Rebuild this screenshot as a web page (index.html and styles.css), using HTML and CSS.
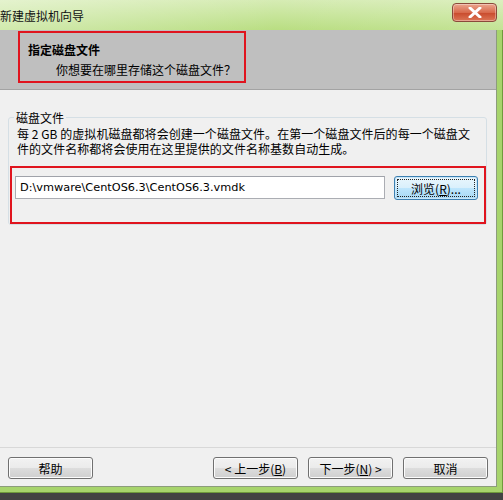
FILE: index.html
```html
<!DOCTYPE html>
<html lang="zh-CN">
<head>
<meta charset="utf-8">
<title>新建虚拟机向导</title>
<link rel="stylesheet" href="styles.css">
</head>
<body>
<div class="win">
  <div class="titlebar">
    <span class="title">新建虚拟机向导</span>
    <span class="close">
      <svg width="14" height="11" viewBox="0 0 14 11"><path d="M2 1 L12 10 M12 1 L2 10" stroke="#fff" stroke-width="3" stroke-linecap="round"/></svg>
    </span>
  </div>
  <div class="frame">
    <div class="client">
      <div class="header">
        <div class="hl">
          <div class="h-title">指定磁盘文件</div>
          <div class="h-sub">你想要在哪里存储这个磁盘文件？</div>
        </div>
      </div>
      <div class="body">
        <fieldset class="group">
          <legend class="legend">磁盘文件</legend>
          <div class="desc">
            <span class="line">每 2 GB 的虚拟机磁盘都将会创建一个磁盘文件。在第一个磁盘文件后的每一个磁盘文</span>
            <span class="line">件的文件名称都将会使用在这里提供的文件名称基数自动生成。</span>
          </div>
          <div class="hl2">
            <div class="field">D:\vmware\CentOS6.3\CentOS6.3.vmdk</div>
            <div class="btn focus"><span class="dots">浏览(<u>R</u>)...</span></div>
          </div>
        </fieldset>
      </div>
      <div class="footer">
        <div class="btn">帮助</div>
        <div class="spacer"></div>
        <div class="btn">&lt; 上一步(<u>B</u>)</div>
        <div class="btn">下一步(<u>N</u>) &gt;</div>
        <div class="btn">取消</div>
      </div>
    </div>
  </div>
  <div class="shadow"></div>
</div>
</body>
</html>
```
FILE: styles.css
```css
* { box-sizing: border-box; }
html, body { margin: 0; padding: 0; }
body {
  width: 503px;
  height: 500px;
  overflow: hidden;
  background: #3f4040;
  font-family: "Noto Sans CJK SC", "Liberation Sans", sans-serif;
  font-size: 12px;
  color: #000;
}
.win { width: 503px; height: 500px; display: flex; flex-direction: column; }
.titlebar {
  height: 30px;
  flex: none;
  display: flex;
  justify-content: space-between;
  align-items: flex-start;
  background:
    linear-gradient(to right, rgba(255,255,255,0.35), rgba(255,255,255,0) 55%, rgba(255,255,255,0.15)),
    linear-gradient(#d6ecb4, #b9de82);
  padding-right: 6px;
}
.title { line-height: 15px; margin-top: 8px; color: #111; }
.close {
  margin-top: 3px;
  width: 45px;
  height: 19px;
  border: 1px solid #8a4a3a;
  border-radius: 4px;
  background: linear-gradient(#eba68e, #d86a4c 50%, #c84a2c 51%, #dc7656);
  display: flex;
  align-items: center;
  justify-content: center;
  box-shadow: inset 0 0 0 1px rgba(255,255,255,0.35);
}
.frame {
  flex: 1;
  display: flex;
  background: #a7d46c;
  padding: 0 6px 6px 0;
  box-shadow: inset -1px -1px 0 #6f9a3c;
}
.client {
  flex: 1;
  display: flex;
  flex-direction: column;
  background: #f0f0f0;
  border-right: 1px solid #8c9c7c;
  border-bottom: 1px solid #8c9c7c;
}
.shadow { height: 7px; flex: none; background: #424242; }
.header {
  height: 60px;
  flex: none;
  background: #bfbfbf;
  border-bottom: 1px solid #a3a3a3;
  padding: 1px 0 0 18px;
}
.hl {
  width: 228px;
  height: 52px;
  border: 2px solid #e0141e;
  padding: 9px 0 0 8px;
}
.h-title { font-weight: bold; line-height: 15px; }
.h-sub { line-height: 15px; margin-top: 5px; padding-left: 28px; }
.body { flex: 1; }
.group {
  margin: 20px 9px 0 8px;
  padding: 0;
  border: 1px solid #d5dfe5;
  border-radius: 3px;
  min-width: 0;
}
.legend { margin-left: 5px; padding: 0 2px; line-height: 15px; }
.desc {
  padding: 1px 0 0 8px;
  display: flex;
  flex-direction: column;
  white-space: nowrap;
  letter-spacing: 0.05px;
}
.line { display: block; height: 15px; line-height: 15px; overflow: hidden; }
.hl2 {
  margin: 10px 0 0 1px;
  width: 476px;
  height: 58px;
  border: 2px solid #e0141e;
  padding: 8px 0 0 3px;
  display: flex;
  align-items: flex-start;
  gap: 9px;
}
.field {
  width: 370px;
  height: 23px;
  background: #fff;
  border: 1px solid #abadb3;
  border-top-color: #a0a3aa;
  padding: 0 0 0 4px;
  line-height: 21px;
  font-family: "DejaVu Sans", "Noto Sans CJK SC", sans-serif;
  font-size: 11.3px;
  white-space: nowrap;
}
.btn {
  width: 85px;
  height: 22px;
  flex: none;
  border: 1px solid #707070;
  border-radius: 3px;
  background: linear-gradient(#f2f2f2, #ebebeb 50%, #dddddd 51%, #cfcfcf);
  box-shadow: inset 0 0 0 1px #fcfcfc;
  display: flex;
  align-items: center;
  justify-content: center;
  line-height: 15px;
  white-space: nowrap;
}
.btn u { text-underline-offset: 1px; }
.btn.focus {
  width: 84px;
  height: 24px;
  border-color: #3c7fb1;
  background: linear-gradient(#eaf6fd, #d9f0fc 50%, #bee6fd 51%, #a7d9f5);
  box-shadow: inset 0 0 0 1px #c8e6f8;
  padding: 2px;
}
.dots {
  flex: 1;
  align-self: stretch;
  border: 1px dotted #222;
  display: flex;
  align-items: center;
  justify-content: center;
}
.footer {
  flex: none;
  height: 39px;
  border-top: 1px solid #d8d8d8;
  display: flex;
  align-items: flex-start;
  padding: 9px 8px 0 8px;
  gap: 10px;
}
.spacer { flex: 1; }
```
